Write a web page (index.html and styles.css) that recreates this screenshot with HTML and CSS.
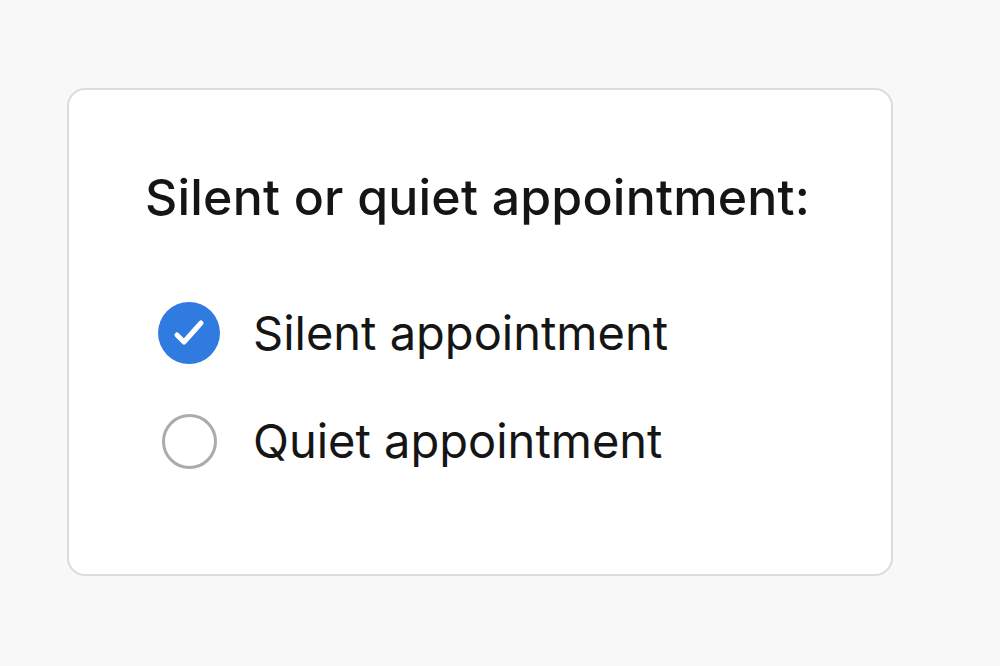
FILE: index.html
```html
<!DOCTYPE html>
<html>
<head>
  <title>Silent or quiet appointment</title>
  <link rel="stylesheet" href="styles.css">
</head>
<body>
  <div class="card">
    <h2 class="card-title">Silent or quiet appointment:</h2>
    <ul class="options">
      <li class="option">
        <span class="radio checked">
          <svg width="62" height="62" viewBox="0 0 62 62">
            <circle cx="31" cy="31" r="31" fill="#2f7be0"/>
            <path d="M19 33 L26 40 L43 21" fill="none" stroke="#fff" stroke-width="5" stroke-linecap="round" stroke-linejoin="round"/>
          </svg>
        </span>
        <span class="option-label">Silent appointment</span>
      </li>
      <li class="option">
        <span class="radio"></span>
        <span class="option-label">Quiet appointment</span>
      </li>
    </ul>
  </div>
</body>
</html>
```

FILE: styles.css
```css
body {
  font-family: Inter, "Noto Sans", sans-serif;
  margin: 0;
  padding: 88px 0 0 67px;
  background-color: #f8f8f8;
  color: #151515;
}
.card {
  width: 826px;
  height: 488px;
  box-sizing: border-box;
  background: #fff;
  border: 2px solid #dcdcdc;
  border-radius: 18px;
  padding: 77px 0 0 76px;
}
.card-title {
  margin: 0 0 75px;
  font-size: 50px;
  font-weight: 500;
  line-height: 60px;
  letter-spacing: 0.2px;
}
.options {
  list-style: none;
  margin: 0;
  padding: 0 0 0 13px;
}
.option {
  display: flex;
  align-items: center;
  height: 62px;
  margin-bottom: 46px;
}
.radio {
  width: 62px;
  height: 62px;
  display: flex;
  align-items: center;
  justify-content: center;
  margin-right: 33px;
  flex-shrink: 0;
}
.radio:not(.checked)::before {
  content: "";
  width: 49px;
  height: 49px;
  border: 3.5px solid #ababab;
  border-radius: 50%;
}
.option-label {
  font-size: 47px;
  line-height: 60px;
}
```
